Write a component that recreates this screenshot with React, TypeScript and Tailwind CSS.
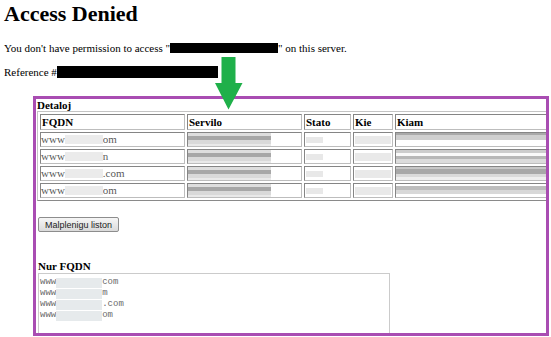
type Row = {
  suffix: string;
  kiam: string;
};

const ROWS: Row[] = [
  {
    suffix: "om",
    kiam: "bg-[linear-gradient(#a9a9a9_0_2px,#cfcfcf_2px_7px,#ffffff_7px)]",
  },
  {
    suffix: "n",
    kiam: "bg-[linear-gradient(#cdcdcd_0_3px,#fafafa_3px_6px,#b8b8b8_6px_9px,#dcdcdc_9px)]",
  },
  {
    suffix: ".com",
    kiam: "bg-[linear-gradient(#c8c8c8_0_2px,#a8a8a8_2px_7px,#dadada_7px_10px,#efefef_10px)]",
  },
  {
    suffix: "om",
    kiam: "bg-[linear-gradient(#ffffff_0_2px,#bdbdbd_2px_6px,#d8d8d8_6px_10px,#ffffff_10px)]",
  },
];

const LIST = ["com", "m", ".com", "om"];

const cell =
  "p-0 border border-t-[#858585] border-l-[#858585] border-b-[#bdbdbd] border-r-[#bdbdbd] align-top";

function Arrow() {
  return (
    <svg
      className="absolute left-[215px] top-[57px]"
      width="28"
      height="53"
      viewBox="0 0 28 53"
    >
      <polygon
        points="6.5,0 20.5,0 20.5,26 27.5,26 13.5,52.5 0,26 6.5,26"
        fill="#1fb04a"
      />
    </svg>
  );
}

export default function App() {
  return (
    <div className="relative h-[337px] w-[551px] overflow-hidden bg-white font-[family-name:'Liberation_Serif',serif] text-black">
      <div className="pl-[4px] pt-[1px]">
        <h1 className="text-[22px] font-bold leading-[26px]">Access Denied</h1>
        <p className="mt-[15px] text-[11px] leading-[13px]">
          You don&apos;t have permission to access &quot;
          <span className="inline-block h-[10px] w-[108px] bg-black align-[-1px]" />
          &quot; on this server.
        </p>
        <p className="mt-[11px] text-[11px] leading-[13px]">
          Reference #
          <span className="inline-block h-[12px] w-[161px] bg-black align-[-2px]" />
        </p>
      </div>

      <section className="ml-[33px] mt-[17px] h-[240px] w-[516px] overflow-hidden border-[3px] border-[#a94db2]">
        <div className="pl-[1px] text-[11px] font-bold leading-[12px]">Detaloj</div>

        <table className="ml-[1px] w-[561px] table-fixed border-separate border-spacing-[2px] border border-t-[#c4c4c4] border-l-[#c4c4c4] border-b-[#8a8a8a] border-r-[#8a8a8a] text-[11px] leading-[13px]">
          <colgroup>
            <col className="w-[145px]" />
            <col className="w-[115px]" />
            <col className="w-[47px]" />
            <col className="w-[40px]" />
            <col className="w-[200px]" />
          </colgroup>
          <thead>
            <tr>
              {["FQDN", "Servilo", "Stato", "Kie", "Kiam"].map((h) => (
                <th key={h} className={`${cell} text-left font-bold`}>
                  <div className="h-[14px] pl-[1px] leading-[15px]">{h}</div>
                </th>
              ))}
            </tr>
          </thead>
          <tbody>
            {ROWS.map((r, i) => (
              <tr key={i}>
                <td className={cell}>
                  <div className="flex h-[13px] items-center text-[#5a5a5a]">
                    www
                    <span className="inline-block h-[9px] w-[38px] bg-[#ebebeb] blur-[0.5px]" />
                    {r.suffix}
                  </div>
                </td>
                <td className={cell}>
                  <div className="h-[13px] w-[83px] bg-[linear-gradient(#dedede_0_3px,#a7a7a7_3px_7px,#d9d9d9_7px_11px,#e9e9e9_11px)]" />
                </td>
                <td className={cell}>
                  <div className="h-[13px] pl-[1px] pt-[4px]">
                    <div className="h-[6px] w-[17px] bg-[#e8e8e8] blur-[0.5px]" />
                  </div>
                </td>
                <td className={cell}>
                  <div className="h-[13px] px-[1px] pt-[3px]">
                    <div className="h-[8px] bg-[#e9e9e9] blur-[0.5px]" />
                  </div>
                </td>
                <td className={cell}>
                  <div className={`h-[13px] ${r.kiam}`} />
                </td>
              </tr>
            ))}
          </tbody>
        </table>

        <button className="ml-[2px] mt-[16px] flex h-[15px] w-[81px] items-center justify-center rounded-[2px] border border-[#8d8d8d] bg-[linear-gradient(#f6f6f6,#dadada)] font-[family-name:'Liberation_Sans',sans-serif] text-[9px] leading-[10px] text-[#222]">
          Malplenigu liston
        </button>

        <div className="mt-[28px] pl-[2px] text-[11px] font-bold leading-[13px]">Nur FQDN</div>
        <div className="ml-[2px] h-[80px] w-[352px] border border-[#cbcbcb] pl-[1px] pt-[3px] font-[family-name:'Liberation_Mono',monospace] text-[9px] leading-[11px] text-[#6a6a6a]">
          {LIST.map((s, i) => (
            <div key={i} className="flex items-center whitespace-pre">
              www
              <span className="inline-block h-[10px] w-[46px] bg-[#e6eaec] blur-[0.5px]" />
              {s}
            </div>
          ))}
        </div>
      </section>

      <Arrow />
    </div>
  );
}
